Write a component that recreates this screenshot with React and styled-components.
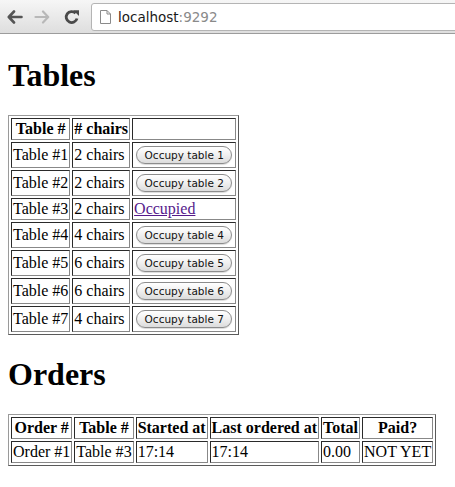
import React from 'react'
import styled, { createGlobalStyle } from 'styled-components'

const tables = [
  { id: 1, chairs: 2, occupied: false },
  { id: 2, chairs: 2, occupied: false },
  { id: 3, chairs: 2, occupied: true },
  { id: 4, chairs: 4, occupied: false },
  { id: 5, chairs: 6, occupied: false },
  { id: 6, chairs: 6, occupied: false },
  { id: 7, chairs: 4, occupied: false },
]

const orders = [
  { id: 1, table: 3, started: '17:14', last: '17:14', total: '0.00', paid: 'NOT YET' },
]

const Global = createGlobalStyle`
  html, body { margin: 0; padding: 0; background: #fff; }
  body { font-family: "Liberation Serif", "Times New Roman", serif; font-size: 16px; color: #000; }
`

const Toolbar = styled.div`
  height: 33px;
  display: flex;
  align-items: center;
  padding-left: 2px;
  background: linear-gradient(#f6f6f6, #dedede);
  border-bottom: 1px solid #9c9c9c;
  overflow: hidden;
`

const NavButton = styled.div`
  width: ${p => p.$w}px;
  height: 24px;
  display: flex;
  align-items: center;
  justify-content: center;
`

const UrlBar = styled.div`
  flex: 1;
  height: 26px;
  margin-left: 3px;
  margin-right: -10px;
  display: flex;
  align-items: center;
  gap: 7px;
  padding-left: 8px;
  background: #fff;
  border: 1px solid #b4b4b4;
  border-radius: 3px;
  font-family: "DejaVu Sans", sans-serif;
  font-size: 13.5px;
`

const Host = styled.span`
  color: #1a1a1a;
`

const Port = styled.span`
  color: #8a8a8a;
`

const Content = styled.div`
  padding: 2px 8px 8px;
`

const Heading = styled.h1`
  font-size: 32px;
  font-weight: bold;
  margin: 21px 0 21px;
  line-height: 37px;
`

const Grid = styled.table`
  border-collapse: separate;
  border-spacing: 2px;
  border: 1px solid;
  border-color: #9a9a9a #5a5a5a #5a5a5a #9a9a9a;
`

const Head = styled.th`
  border: 1px solid;
  border-color: #2a2a2a #888 #888 #2a2a2a;
  padding: 1px;
  font-weight: bold;
  text-align: center;
  line-height: 18px;
  white-space: nowrap;
`

const Cell = styled.td`
  border: 1px solid;
  border-color: #2a2a2a #888 #888 #2a2a2a;
  padding: 1px;
  line-height: 18px;
  white-space: nowrap;
  vertical-align: middle;
`

const Button = styled.button`
  display: inline-block;
  vertical-align: top;
  height: 18px;
  margin: 2px;
  padding: 0 7.5px;
  font-family: "DejaVu Sans", sans-serif;
  font-size: 10.5px;
  line-height: 16px;
  color: #111;
  background: linear-gradient(#ffffff, #f0f0f0 50%, #dcdcdc);
  border: 1px solid #8c8c8c;
  border-radius: 9px;
  box-shadow: 0 1px 1px rgba(0, 0, 0, 0.15);
`

const Visited = styled.a`
  color: #551a8b;
  text-decoration: underline;
`

const BackIcon = ({ color }) => (
  <svg width="16" height="14" viewBox="0 0 16 14">
    <path d="M7 1.5 L1.8 7 L7 12.5 M2 7 H14.5" fill="none" stroke={color} strokeWidth="2.6" strokeLinecap="round" strokeLinejoin="round" />
  </svg>
)

const ForwardIcon = ({ color }) => (
  <svg width="16" height="14" viewBox="0 0 16 14">
    <path d="M9 1.5 L14.2 7 L9 12.5 M14 7 H1.5" fill="none" stroke={color} strokeWidth="2.2" strokeLinecap="round" strokeLinejoin="round" />
  </svg>
)

const ReloadIcon = () => (
  <svg width="16" height="16" viewBox="0 0 16 16">
    <path d="M13 9.5 A5.5 5.5 0 1 1 11.6 4.2" fill="none" stroke="#4a4a4a" strokeWidth="2.8" />
    <path d="M9.2 1.2 L15 1.2 L15 7 Z" fill="#4a4a4a" />
  </svg>
)

const PageIcon = () => (
  <svg width="11" height="14" viewBox="0 0 11 14">
    <path d="M0.5 0.5 H7 L10.5 4 V13.5 H0.5 Z" fill="#fff" stroke="#8a8a8a" />
    <path d="M7 0.5 V4 H10.5" fill="none" stroke="#8a8a8a" />
  </svg>
)

const App = () => {
  return (
    <>
      <Global />
      <Toolbar>
        <NavButton $w={26}><BackIcon color="#555" /></NavButton>
        <NavButton $w={28}><ForwardIcon color="#b8b8b8" /></NavButton>
        <NavButton $w={32}><ReloadIcon /></NavButton>
        <UrlBar>
          <PageIcon />
          <span><Host>localhost</Host><Port>:9292</Port></span>
        </UrlBar>
      </Toolbar>
      <Content>
        <Heading>Tables</Heading>
        <Grid>
          <tbody>
            <tr>
              <Head>Table #</Head>
              <Head># chairs</Head>
              <Head></Head>
            </tr>
            {tables.map(t => (
              <tr key={t.id}>
                <Cell>Table #{t.id}</Cell>
                <Cell>{t.chairs} chairs</Cell>
                <Cell>
                  {t.occupied
                    ? <Visited href="#">Occupied</Visited>
                    : <Button>Occupy table {t.id}</Button>}
                </Cell>
              </tr>
            ))}
          </tbody>
        </Grid>
        <Heading>Orders</Heading>
        <Grid>
          <tbody>
            <tr>
              <Head>Order #</Head>
              <Head>Table #</Head>
              <Head>Started at</Head>
              <Head>Last ordered at</Head>
              <Head>Total</Head>
              <Head>Paid?</Head>
            </tr>
            {orders.map(o => (
              <tr key={o.id}>
                <Cell>Order #{o.id}</Cell>
                <Cell>Table #{o.table}</Cell>
                <Cell>{o.started}</Cell>
                <Cell>{o.last}</Cell>
                <Cell>{o.total}</Cell>
                <Cell>{o.paid}</Cell>
              </tr>
            ))}
          </tbody>
        </Grid>
      </Content>
    </>
  )
}

export default App
